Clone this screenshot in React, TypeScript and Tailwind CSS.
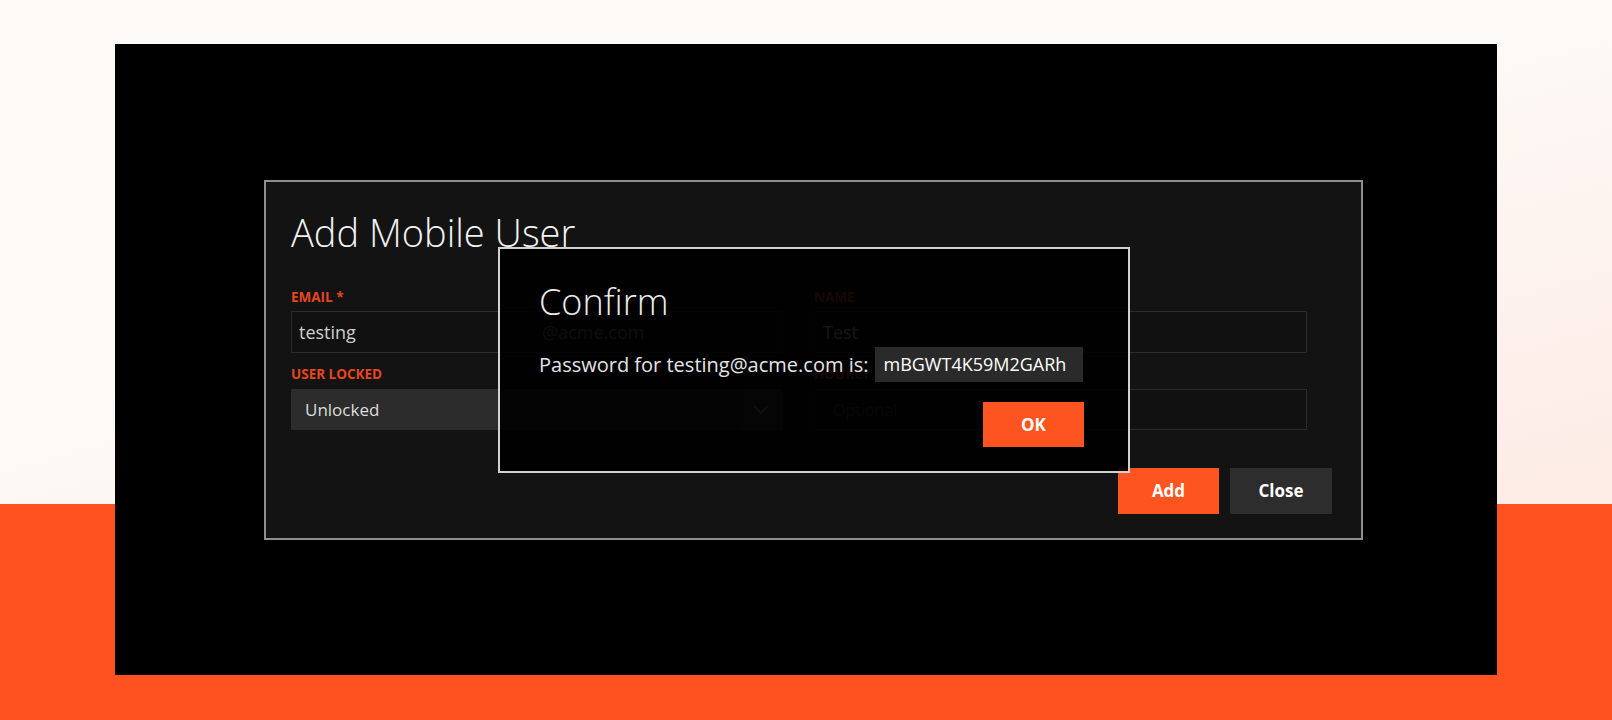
import React from 'react';

const labelCls =
  "block text-[13.5px] leading-[13px] font-bold uppercase text-[#e5461d]";

function Chevron() {
  return (
    <svg width="18" height="12" viewBox="0 0 18 12" fill="none">
      <polyline points="2,2 9,9 16,2" stroke="#9a9a9a" strokeWidth="2" />
    </svg>
  );
}

function ConfirmDialog({ email, password }: { email: string; password: string }) {
  return (
    <div className="absolute left-[232px] top-[65px] w-[632px] h-[226px] border-2 border-[#d2d2d2] bg-black/[0.9] pl-[39px] pt-[35px] pr-[44px]">
      <h2 className="text-[36px] leading-[36px] font-light text-[#ececec]">Confirm</h2>
      <div className="mt-[27px] flex items-center h-[35px]">
        <span className="text-[20px] text-[#e4e4e4]">Password for {email} is:</span>
        <span className="ml-[7px] h-[35px] w-[208px] bg-[#2a2a2a] px-[8px] flex items-center text-[18px] font-medium text-white">
          {password}
        </span>
      </div>
      <div className="mt-[20px] flex justify-end">
        <button className="w-[101px] h-[45px] bg-[#fd5420] text-[17px] font-bold text-white">OK</button>
      </div>
    </div>
  );
}

export default function App() {
  return (
    <div className="w-full h-[720px] font-['Open_Sans',sans-serif] bg-[linear-gradient(180deg,transparent_504px,#ff5220_504px),linear-gradient(165deg,#fdfaf8_35%,#fde5dd)] pt-[44px] pl-[115px]">
      <div className="w-[1382px] h-[631px] bg-black pt-[136px] pl-[149px]">
        <div className="relative w-[1099px] h-[360px] border-2 border-[#8e8e8e] bg-[#131313] pl-[25px] pt-[31px] pr-[29px]">
          <h1 className="text-[38px] leading-[38px] font-light text-[#f1f1f1]">Add Mobile User</h1>

          <div className="mt-[40px] grid grid-cols-[492px_493px] gap-x-[31px]">
            {/* left column */}
            <div className="flex flex-col">
              <label className={labelCls}>Email *</label>
              <div className="mt-[7px] h-[42px] border border-[#2c2c2c] bg-[#111111] flex items-center">
                <span className="w-[250px] pl-[7px] text-[18px] text-[#cfcfcf]">testing</span>
                <span className="text-[18px] text-[#8a8a8a]">@acme.com</span>
              </div>
              <label className={labelCls + " mt-[15px]"}>User Locked</label>
              <div className="mt-[8px] h-[41px] bg-[#2c2c2c] flex items-center justify-between">
                <span className="pl-[14px] text-[17px] text-[#dcdcdc]">Unlocked</span>
                <span className="w-[44px] h-[41px] bg-[#363636] flex items-center justify-center">
                  <Chevron />
                </span>
              </div>
            </div>

            {/* right column */}
            <div className="flex flex-col">
              <label className={labelCls}>Name</label>
              <div className="mt-[7px] h-[42px] border border-[#2c2c2c] bg-[#111111] flex items-center">
                <span className="pl-[8px] text-[18px] text-[#cfcfcf]">Test</span>
              </div>
              <label className={labelCls + " mt-[15px]"}>Hourly Rate</label>
              <div className="mt-[8px] h-[41px] border border-[#2c2c2c] bg-[#111111] flex items-center">
                <span className="pl-[18px] text-[16px] text-[#4a4a4a]">Optional</span>
              </div>
            </div>
          </div>

          <div className="mt-[38px] flex justify-end gap-[11px]">
            <button className="w-[101px] h-[46px] bg-[#fd5420] text-[17px] font-bold text-white">Add</button>
            <button className="w-[102px] h-[46px] bg-[#2d2d2d] text-[17px] font-bold text-white">Close</button>
          </div>

          <ConfirmDialog email="testing@acme.com" password="mBGWT4K59M2GARh" />
        </div>
      </div>
    </div>
  );
}
